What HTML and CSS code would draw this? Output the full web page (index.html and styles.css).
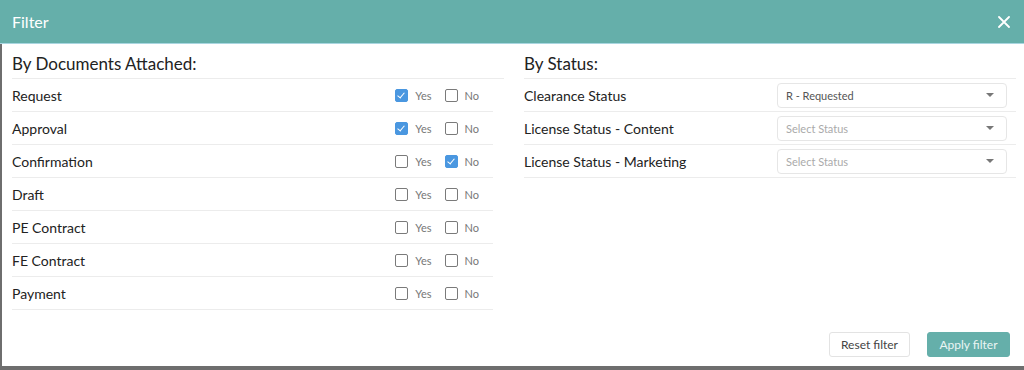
FILE: index.html
```html
<!DOCTYPE html>
<html>
<head>
    <title>Filter</title>
    <link rel="stylesheet" href="styles.css">
</head>
<body>
    <div class="modal">
        <div class="modal-header">
            <span class="modal-title">Filter</span>
            <span class="modal-close">
                <svg width="12" height="12" viewBox="0 0 12 12"><path d="M1 1L11 11M11 1L1 11" stroke="#fff" stroke-width="1.8" stroke-linecap="round"/></svg>
            </span>
        </div>

        <div class="modal-body">
            <div class="filter-grid">
                <!-- documents -->
                <div class="filter-section">
                    <div class="section-title">By Documents Attached:</div>
                    <div class="doc-list">
                        <div class="doc-row">
                            <span class="row-label">Request</span>
                            <span class="choices">
                                <span class="choice"><span class="box checked"></span>Yes</span>
                                <span class="choice"><span class="box"></span>No</span>
                            </span>
                        </div>
                        <div class="doc-row">
                            <span class="row-label">Approval</span>
                            <span class="choices">
                                <span class="choice"><span class="box checked"></span>Yes</span>
                                <span class="choice"><span class="box"></span>No</span>
                            </span>
                        </div>
                        <div class="doc-row">
                            <span class="row-label">Confirmation</span>
                            <span class="choices">
                                <span class="choice"><span class="box"></span>Yes</span>
                                <span class="choice"><span class="box checked"></span>No</span>
                            </span>
                        </div>
                        <div class="doc-row">
                            <span class="row-label">Draft</span>
                            <span class="choices">
                                <span class="choice"><span class="box"></span>Yes</span>
                                <span class="choice"><span class="box"></span>No</span>
                            </span>
                        </div>
                        <div class="doc-row">
                            <span class="row-label">PE Contract</span>
                            <span class="choices">
                                <span class="choice"><span class="box"></span>Yes</span>
                                <span class="choice"><span class="box"></span>No</span>
                            </span>
                        </div>
                        <div class="doc-row">
                            <span class="row-label">FE Contract</span>
                            <span class="choices">
                                <span class="choice"><span class="box"></span>Yes</span>
                                <span class="choice"><span class="box"></span>No</span>
                            </span>
                        </div>
                        <div class="doc-row">
                            <span class="row-label">Payment</span>
                            <span class="choices">
                                <span class="choice"><span class="box"></span>Yes</span>
                                <span class="choice"><span class="box"></span>No</span>
                            </span>
                        </div>
                    </div>
                </div>

                <!-- status -->
                <div class="filter-section">
                    <div class="section-title">By Status:</div>
                    <div class="status-list">
                        <div class="status-row">
                            <span class="row-label">Clearance Status</span>
                            <div class="select">
                                <span class="select-value">R - Requested</span>
                                <span class="caret"></span>
                            </div>
                        </div>
                        <div class="status-row">
                            <span class="row-label">License Status - Content</span>
                            <div class="select">
                                <span class="select-value placeholder">Select Status</span>
                                <span class="caret"></span>
                            </div>
                        </div>
                        <div class="status-row">
                            <span class="row-label">License Status - Marketing</span>
                            <div class="select">
                                <span class="select-value placeholder">Select Status</span>
                                <span class="caret"></span>
                            </div>
                        </div>
                    </div>
                </div>
            </div>

            <div class="modal-footer">
                <button class="btn btn-reset">Reset filter</button>
                <button class="btn btn-apply">Apply filter</button>
            </div>
        </div>
    </div>
</body>
</html>
```

FILE: styles.css
```css
html, body {
    margin: 0;
    height: 100%;
}
body {
    font-family: Lato, "Open Sans", sans-serif;
    background-color: #6e6e6e;
}
.modal {
    height: 366px;
    display: flex;
    flex-direction: column;
}
.modal-header {
    height: 43px;
    background-color: #65afaa;
    border-bottom: 1px solid #a9d6e0;
    display: flex;
    align-items: center;
    justify-content: space-between;
    padding: 0 14px 0 12px;
}
.modal-title {
    color: #fff;
    font-size: 16px;
}
.modal-close {
    display: flex;
}
.modal-body {
    flex: 1;
    margin-left: 2px;
    background-color: #fff;
    display: flex;
    flex-direction: column;
    justify-content: space-between;
}
.filter-grid {
    display: grid;
    grid-template-columns: 492px 492px;
    gap: 20px;
    padding-left: 10px;
}
.section-title {
    font-size: 17px;
    color: #222;
    height: 34px;
    line-height: 40px;
    border-bottom: 1px solid #ececec;
}
.doc-list {
    margin-right: 11px;
}
.doc-row, .status-row {
    height: 32px;
    border-bottom: 1px solid #ececec;
    display: flex;
    align-items: center;
    justify-content: space-between;
}
.row-label {
    font-size: 14px;
    color: #222;
}
.choices {
    display: flex;
    gap: 13px;
    margin-right: 14px;
}
.choice {
    display: flex;
    align-items: center;
    font-size: 11px;
    color: #777;
}
.box {
    width: 11px;
    height: 11px;
    border: 1px solid #7a7a7a;
    border-radius: 2px;
    margin-right: 7px;
    position: relative;
}
.box.checked {
    background-color: #4a97e0;
    border-color: #4a97e0;
}
.box.checked::after {
    content: "";
    position: absolute;
    left: 3px;
    top: 1px;
    width: 3px;
    height: 6px;
    border: solid #fff;
    border-width: 0 1.5px 1.5px 0;
    transform: rotate(40deg);
}
.select {
    width: 230px;
    height: 25px;
    border: 1px solid #e6e6e6;
    border-radius: 4px;
    margin-right: 9px;
    display: flex;
    align-items: center;
    justify-content: space-between;
    padding: 0 12px 0 8px;
    box-sizing: border-box;
}
.select-value {
    font-size: 11px;
    color: #555;
}
.select-value.placeholder {
    color: #aaa;
}
.caret {
    width: 0;
    height: 0;
    border-left: 4px solid transparent;
    border-right: 4px solid transparent;
    border-top: 4px solid #777;
}
.modal-footer {
    display: flex;
    justify-content: flex-end;
    gap: 17px;
    padding: 0 14px 9px 0;
}
.btn {
    font-family: Lato, "Open Sans", sans-serif;
    font-size: 12px;
    height: 25px;
    border-radius: 3px;
    cursor: pointer;
}
.btn-reset {
    width: 81px;
    background-color: #fff;
    border: 1px solid #e3e3e3;
    color: #444;
}
.btn-apply {
    width: 83px;
    background-color: #65afaa;
    border: 1px solid #65afaa;
    color: #eaf5f4;
}
```
